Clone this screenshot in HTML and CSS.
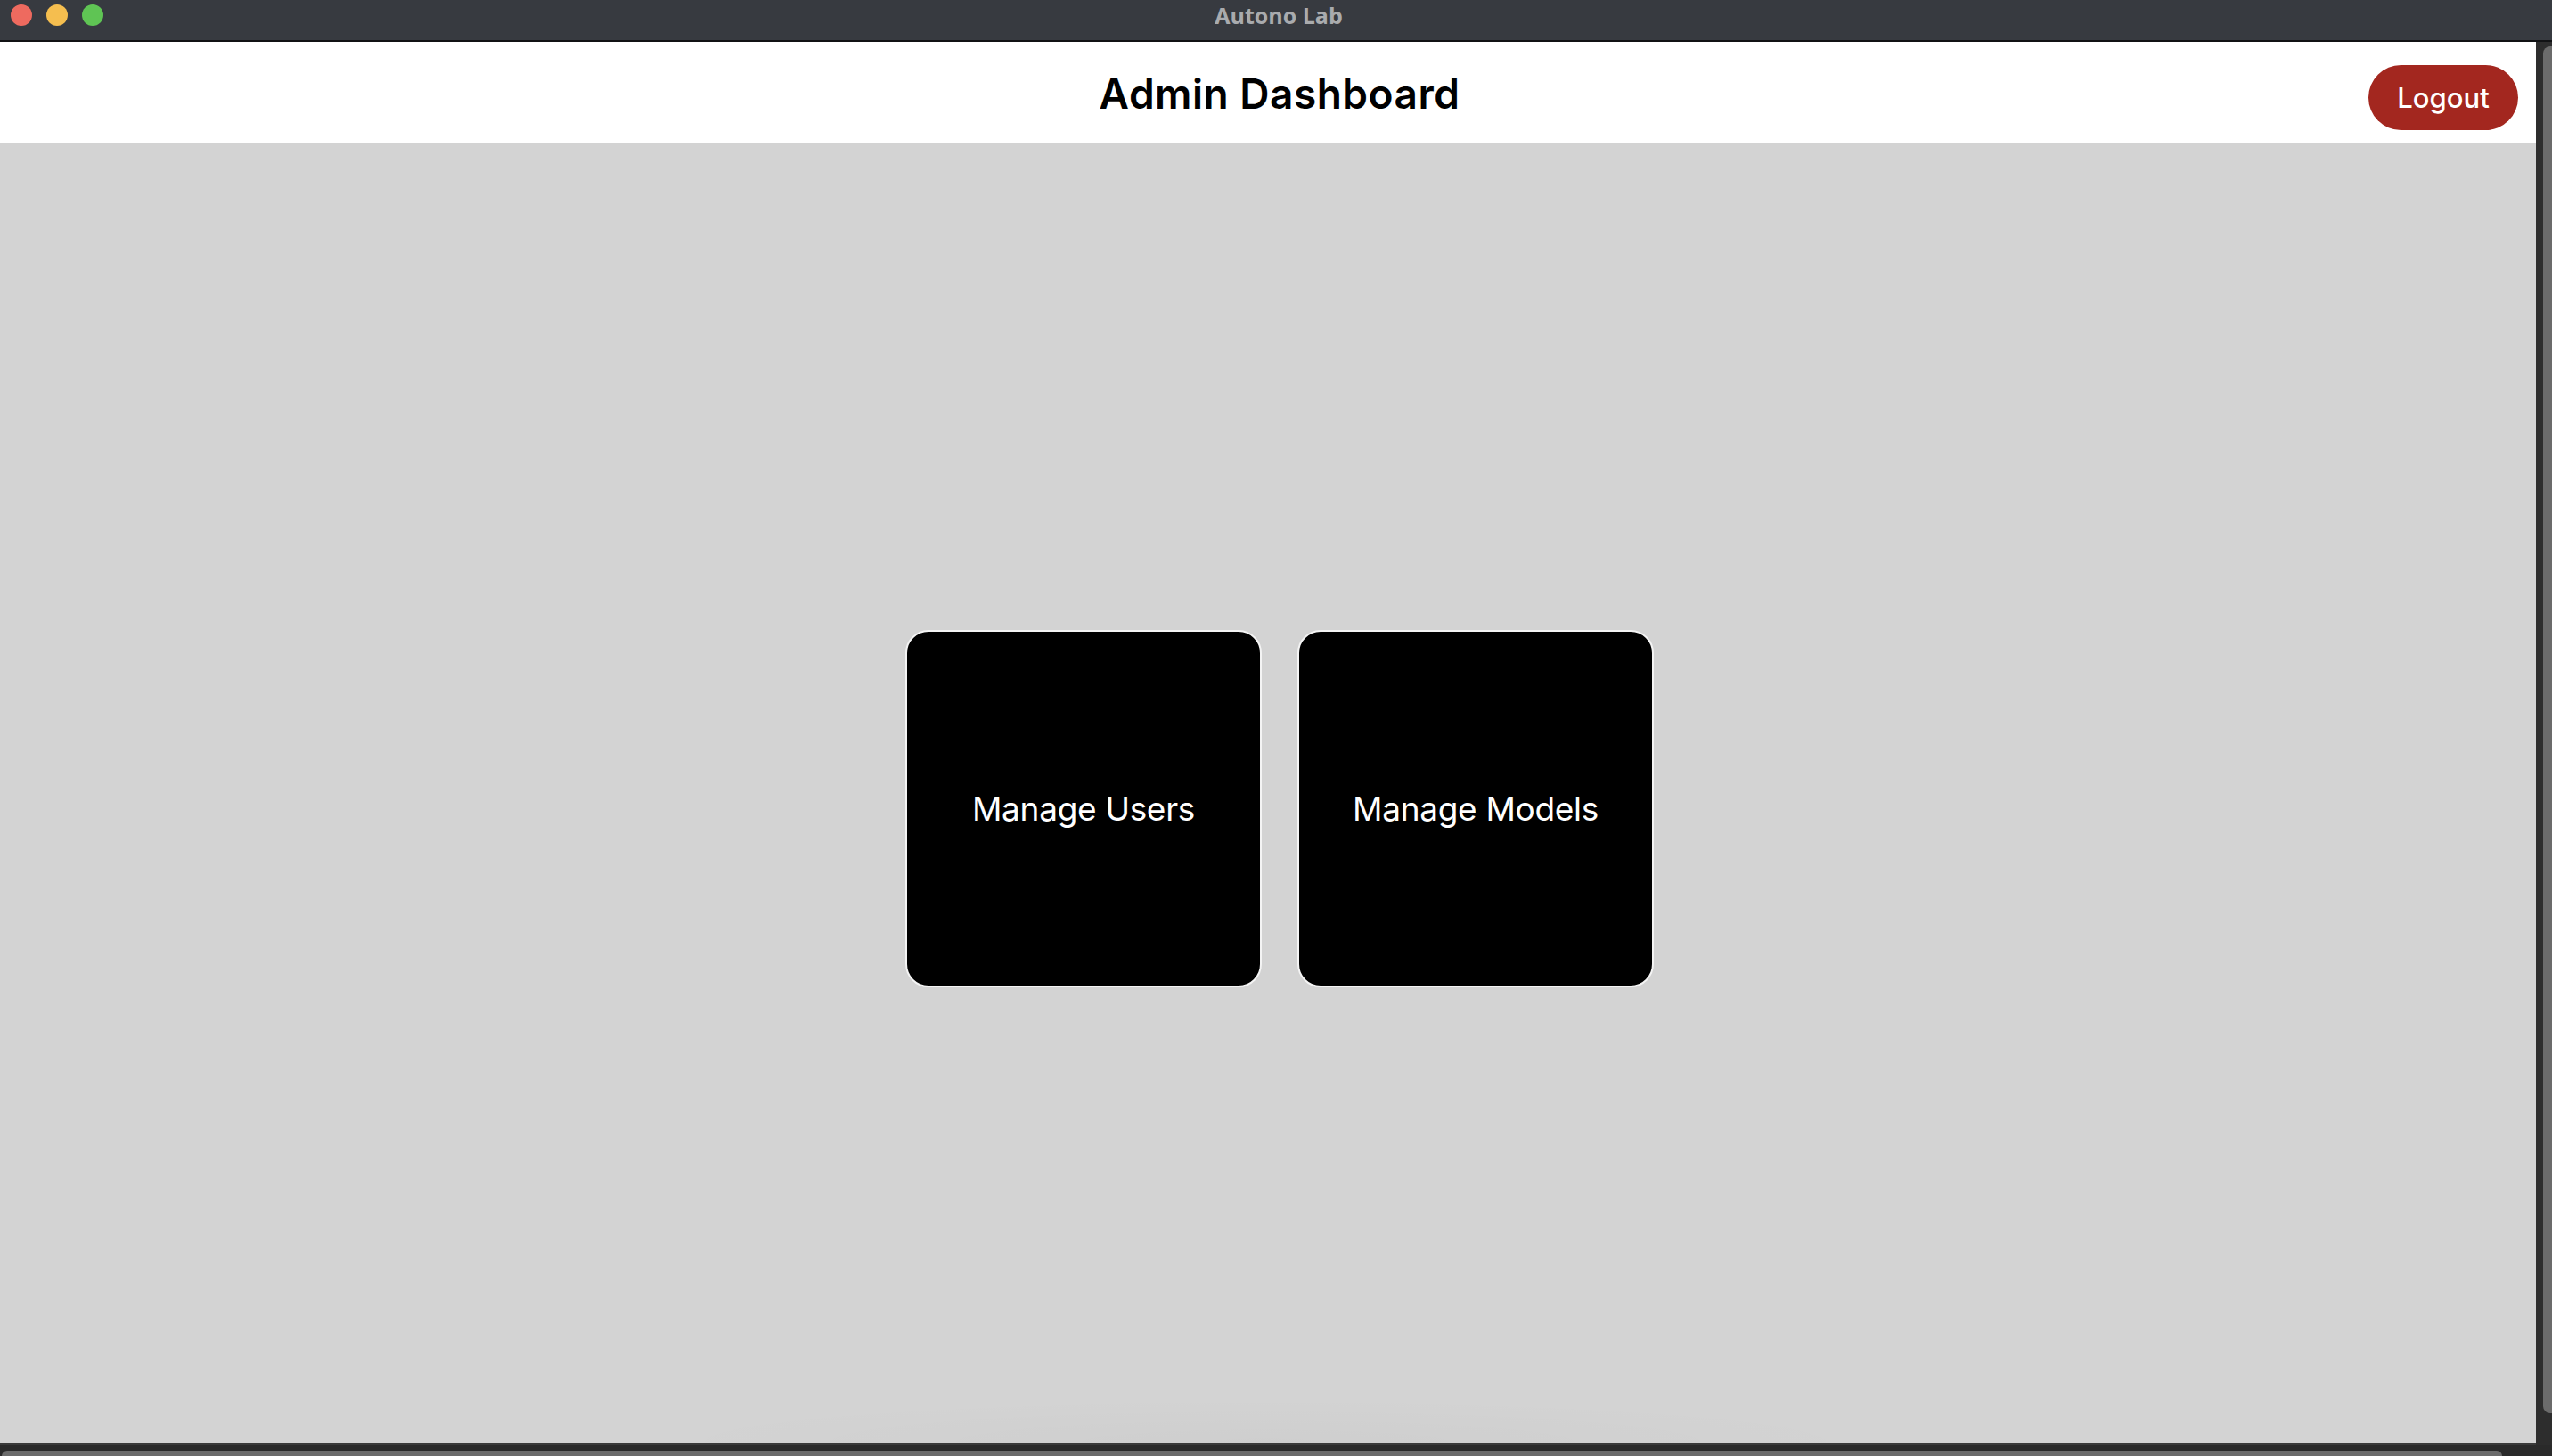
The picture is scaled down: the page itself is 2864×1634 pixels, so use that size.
FILE: index.html
```html
<!DOCTYPE html>
<html lang="en">
<head>
<meta charset="utf-8">
<title>Autono Lab</title>
<link rel="stylesheet" href="styles.css">
</head>
<body>
<div class="window">
  <div class="titlebar">
    <div class="lights">
      <span class="light red"></span>
      <span class="light yellow"></span>
      <span class="light green"></span>
    </div>
    <div class="wintitle">Autono Lab</div>
  </div>
  <div class="frame">
    <div class="app">
      <header class="header">
        <h1 class="title">Admin Dashboard</h1>
        <button class="logout">Logout</button>
      </header>
      <main class="content">
        <div class="cards">
          <div class="card">Manage Users</div>
          <div class="card">Manage Models</div>
        </div>
      </main>
    </div>
    <div class="vscroll"><div class="vthumb"></div></div>
  </div>
  <div class="hscroll"><div class="hthumb"></div></div>
</div>
</body>
</html>
```
FILE: styles.css
```css
html, body {
  margin: 0;
  padding: 0;
  height: 100%;
}
body {
  background: #2a2a2a;
  font-family: Inter, "Noto Sans", "Liberation Sans", sans-serif;
  overflow: hidden;
}
.window {
  display: flex;
  flex-direction: column;
  height: 1634px;
  width: 2864px;
}
.titlebar {
  height: 45px;
  flex: none;
  background: #373a40;
  border-bottom: 2px solid #111214;
  display: flex;
  align-items: center;
  position: relative;
}
.lights {
  display: flex;
  gap: 16px;
  padding-left: 12px;
  margin-top: -11px;
}
.light {
  width: 24px;
  height: 24px;
  border-radius: 50%;
  display: block;
}
.red { background: #ee6a5f; }
.yellow { background: #f5be4f; }
.green { background: #5fc454; }
.wintitle {
  position: absolute;
  left: 6px;
  right: 0;
  top: 0;
  text-align: center;
  font-family: "Open Sans", Inter, sans-serif;
  font-weight: 700;
  font-size: 25px;
  line-height: 34px;
  color: #a9abae;
}
.frame {
  flex: 1;
  display: flex;
  min-height: 0;
}
.app {
  width: 2846px;
  flex: none;
  display: flex;
  flex-direction: column;
  border-bottom: 3px solid #3a3a3a;
}
.header {
  height: 113px;
  flex: none;
  background: #ffffff;
  display: flex;
  align-items: center;
  justify-content: center;
  padding-left: 26px;
  position: relative;
}
.title {
  margin: 0;
  font-size: 46px;
  font-weight: 600;
  color: #000;
  letter-spacing: 0.5px;
  margin-top: 2px;
}
.logout {
  position: absolute;
  right: 20px;
  top: 26px;
  width: 168px;
  height: 73px;
  border: none;
  border-radius: 37px;
  background: #a3271f;
  color: #fff;
  font-family: Inter, sans-serif;
  font-size: 31px;
  font-weight: 500;
  padding: 0;
}
.content {
  flex: 1;
  background: #d3d3d3;
  background-image: radial-gradient(ellipse 700px 50px at 1420px 100%, rgba(0,0,0,0.025), rgba(0,0,0,0));
  display: flex;
  align-items: center;
  justify-content: center;
  padding-top: 36px;
  padding-left: 26px;
}
.cards {
  display: flex;
  gap: 40px;
}
.card {
  box-sizing: border-box;
  width: 400px;
  height: 401px;
  background: #000;
  border: 2px solid #f4f4f4;
  border-radius: 26px;
  color: #fff;
  font-size: 37px;
  font-weight: 400;
  display: flex;
  align-items: center;
  justify-content: center;
  letter-spacing: -0.3px;
}
.vscroll {
  flex: 1;
  background: #2d2d2d;
  position: relative;
}
.vthumb {
  position: absolute;
  left: 8px;
  right: 0;
  top: 5px;
  bottom: 36px;
  background: #6b6b6b;
  border-radius: 8px 0 0 8px;
}
.hscroll {
  height: 12px;
  flex: none;
  background: #2a2a2a;
  position: relative;
}
.hthumb {
  position: absolute;
  left: 2px;
  width: 2806px;
  top: 6px;
  bottom: 0;
  background: #6b6b6b;
  border-radius: 8px 8px 0 0;
}
```
